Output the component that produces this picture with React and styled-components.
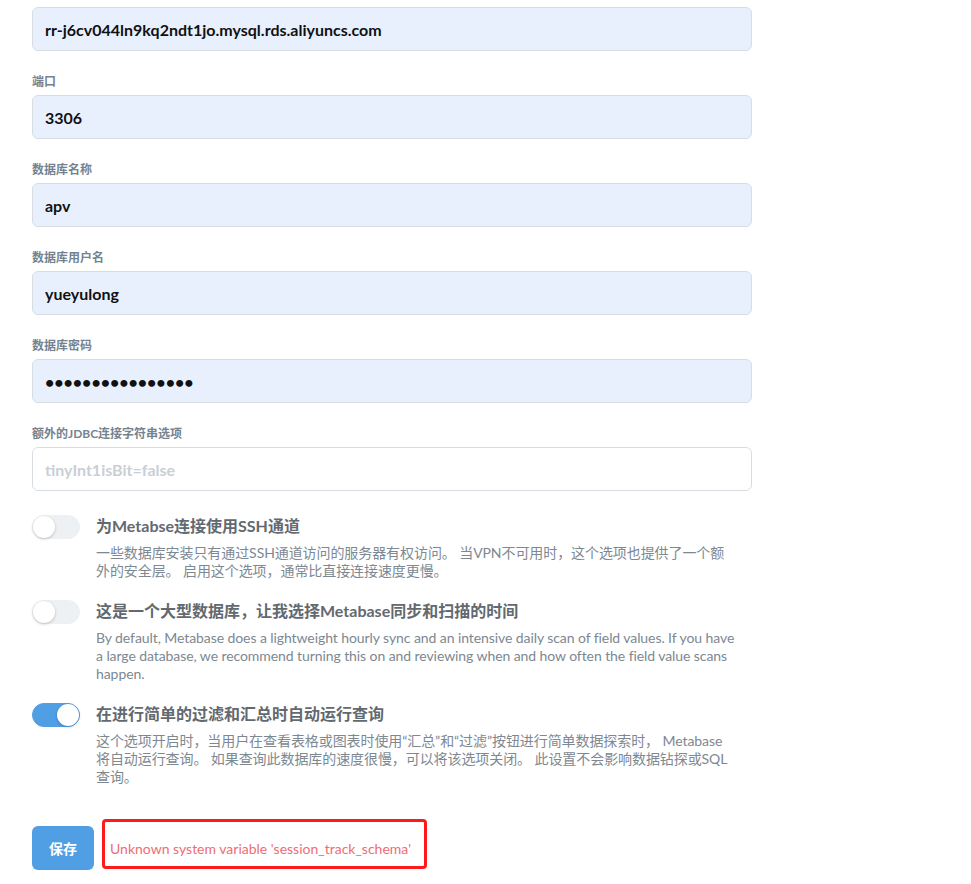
import React from 'react';
import styled, { createGlobalStyle } from 'styled-components';

const GlobalStyle = createGlobalStyle`
  body {
    margin: 0;
    background: #fff;
    font-family: Lato, "Noto Sans CJK SC", sans-serif;
  }
`

const Page = styled.div`
  width: 720px;
  padding: 7px 0 0 32px;
`

const Field = styled.div`
  margin-bottom: 24px;
`

const Label = styled.div`
  font-size: 12px;
  line-height: 14px;
  font-weight: 700;
  color: #74838f;
  margin-bottom: 6px;
`

const Input = styled.input`
  display: block;
  box-sizing: border-box;
  width: 720px;
  height: 44px;
  padding: 0 12px;
  border: 1px solid #d7dde2;
  border-radius: 6px;
  background: ${props => (props.$filled ? '#e8f0fe' : '#fff')};
  font-family: Lato, "Noto Sans CJK SC", sans-serif;
  font-size: 16px;
  font-weight: 700;
  color: #111;
  outline: none;
  &::placeholder {
    color: #c9cfd4;
  }
`

const OptionRow = styled.div`
  display: flex;
  margin-bottom: 20px;
`

const ToggleCell = styled.div`
  width: 64px;
  flex-shrink: 0;
`

const Toggle = styled.div`
  position: relative;
  box-sizing: border-box;
  width: 48px;
  height: 24px;
  border-radius: 99px;
  background: ${props => (props.$on ? '#509ee3' : '#edf1f4')};
  border: 1px solid ${props => (props.$on ? '#509ee3' : '#edf1f4')};
  &::after {
    content: '';
    position: absolute;
    top: 0;
    left: ${props => (props.$on ? '24px' : '0')};
    width: 22px;
    height: 22px;
    border-radius: 50%;
    background: #fff;
    box-shadow: 0 1px 3px rgba(0, 0, 0, 0.22);
  }
`

const OptionBody = styled.div`
  flex: 1;
`

const OptionTitle = styled.div`
  font-size: 16px;
  line-height: 22px;
  padding-bottom: 2px;
  font-weight: 700;
  color: #62696f;
`

const OptionDesc = styled.div`
  margin-top: 5px;
  font-size: 14px;
  line-height: 18px;
  letter-spacing: -0.08px;
  color: #7d8891;
  white-space: nowrap;
`

const DescLine = styled.div``

const Footer = styled.div`
  display: flex;
  align-items: flex-end;
  margin-top: 33px;
`

const SaveButton = styled.button`
  width: 62px;
  height: 44px;
  border: none;
  border-radius: 6px;
  background: #509ee3;
  color: #fff;
  font-family: "Noto Sans CJK SC", Lato, sans-serif;
  font-size: 14px;
  font-weight: 700;
`

const ErrorBox = styled.div`
  box-sizing: border-box;
  width: 325px;
  margin-left: 8px;
  margin-bottom: 1px;
  padding: 18px 4px 8px 5px;
  border: 3px solid #fe1a1a;
  border-radius: 4px;
  font-size: 14px;
  line-height: 18px;
  color: #ee6d73;
  white-space: nowrap;
`

const fields = [
  { label: null, value: 'rr-j6cv044ln9kq2ndt1jo.mysql.rds.aliyuncs.com' },
  { label: '端口', value: '3306' },
  { label: '数据库名称', value: 'apv' },
  { label: '数据库用户名', value: 'yueyulong' },
  { label: '数据库密码', value: 'aaaaaaaaaaaaaaaa', type: 'password' },
  { label: '额外的JDBC连接字符串选项', value: '', placeholder: 'tinyInt1isBit=false' },
]

const options = [
  {
    title: '为Metabse连接使用SSH通道',
    lines: [
      '一些数据库安装只有通过SSH通道访问的服务器有权访问。 当VPN不可用时，这个选项也提供了一个额',
      '外的安全层。 启用这个选项，通常比直接连接速度更慢。',
    ],
    on: false,
  },
  {
    title: '这是一个大型数据库，让我选择Metabase同步和扫描的时间',
    lines: [
      'By default, Metabase does a lightweight hourly sync and an intensive daily scan of field values. If you have',
      'a large database, we recommend turning this on and reviewing when and how often the field value scans',
      'happen.',
    ],
    on: false,
  },
  {
    title: '在进行简单的过滤和汇总时自动运行查询',
    lines: [
      '这个选项开启时，当用户在查看表格或图表时使用“汇总”和“过滤”按钮进行简单数据探索时， Metabase',
      '将自动运行查询。 如果查询此数据库的速度很慢，可以将该选项关闭。 此设置不会影响数据钻探或SQL',
      '查询。',
    ],
    on: true,
  },
]

function App() {
  return (
    <Page>
      <GlobalStyle />
      {fields.map((f, i) => (
        <Field key={i}>
          {f.label && <Label>{f.label}</Label>}
          <Input
            type={f.type || 'text'}
            defaultValue={f.value}
            placeholder={f.placeholder}
            $filled={!!f.value}
          />
        </Field>
      ))}
      {options.map((o, i) => (
        <OptionRow key={i}>
          <ToggleCell>
            <Toggle $on={o.on} />
          </ToggleCell>
          <OptionBody>
            <OptionTitle>{o.title}</OptionTitle>
            <OptionDesc>
              {o.lines.map((line, j) => (
                <DescLine key={j}>{line}</DescLine>
              ))}
            </OptionDesc>
          </OptionBody>
        </OptionRow>
      ))}
      <Footer>
        <SaveButton>保存</SaveButton>
        <ErrorBox>Unknown system variable 'session_track_schema'</ErrorBox>
      </Footer>
    </Page>
  );
}

export default App;
